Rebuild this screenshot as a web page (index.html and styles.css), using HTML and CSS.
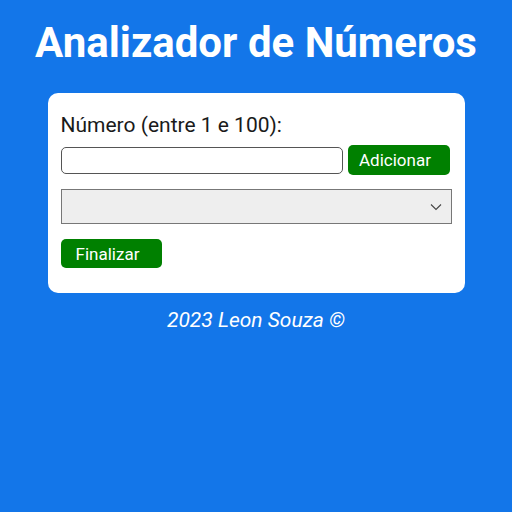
FILE: index.html
```html
<!DOCTYPE html>
<html lang="pt-BR">
<head>
<meta charset="utf-8">
<title>Analizador de Números</title>
<link rel="stylesheet" href="styles.css">
</head>
<body>
<header class="header">
  <h1 class="title">Analizador de Números</h1>
</header>
<main class="card">
  <label class="label" for="num">Número (entre 1 e 100):</label>
  <div class="row">
    <input class="input" type="number" id="num">
    <button class="btn btn-add" type="button">Adicionar</button>
  </div>
  <div class="select-box">
    <svg class="chev" width="12" height="8" viewBox="0 0 12 8"><path d="M1 1.5 L6 6.5 L11 1.5" fill="none" stroke="#444" stroke-width="1.1"/></svg>
  </div>
  <button class="btn btn-fin" type="button">Finalizar</button>
</main>
<footer class="footer">2023 Leon Souza ©</footer>
</body>
</html>
```

FILE: styles.css
```css
html, body {
  margin: 0;
  padding: 0;
}
body {
  background: #1376e9;
  font-family: Roboto, "Liberation Sans", sans-serif;
  color: #111;
  height: 512px;
  overflow: hidden;
}
.header {
  padding-top: 18px;
  text-align: center;
}
.title {
  margin: 0;
  color: #fff;
  font-size: 42px;
  font-weight: 700;
  line-height: 50px;
}
.card {
  box-sizing: border-box;
  width: 417px;
  margin: 25px auto 0;
  background: #fff;
  border-radius: 10px;
  padding: 20px 13px 25px;
  display: flex;
  flex-direction: column;
  align-items: flex-start;
}
.label {
  font-size: 21px;
  line-height: 24px;
  color: #1a1a1a;
}
.row {
  display: flex;
  align-items: center;
  gap: 5px;
  margin-top: 8px;
}
.input {
  box-sizing: border-box;
  width: 282px;
  height: 27px;
  border: 1px solid #555;
  border-radius: 5px;
  margin: 0;
  padding: 0 4px;
  background: #fff;
}
.btn {
  box-sizing: border-box;
  background: #008000;
  color: #fff;
  border: none;
  border-radius: 5px;
  font-family: Roboto, "Liberation Sans", sans-serif;
  font-size: 17px;
  padding: 0 7px 0 0;
  margin: 0;
}
.btn-add {
  width: 102px;
  height: 30px;
}
.select-box {
  box-sizing: border-box;
  width: 391px;
  height: 35px;
  margin-top: 14px;
  background: #eeeeee;
  border: 1px solid #777;
  display: flex;
  align-items: center;
  justify-content: flex-end;
  padding-right: 9px;
}
.btn-fin {
  width: 101px;
  height: 29px;
  margin-top: 15px;
}
.footer {
  text-align: center;
  color: #fff;
  font-style: italic;
  font-size: 21px;
  margin-top: 15px;
  line-height: 24px;
}
```
